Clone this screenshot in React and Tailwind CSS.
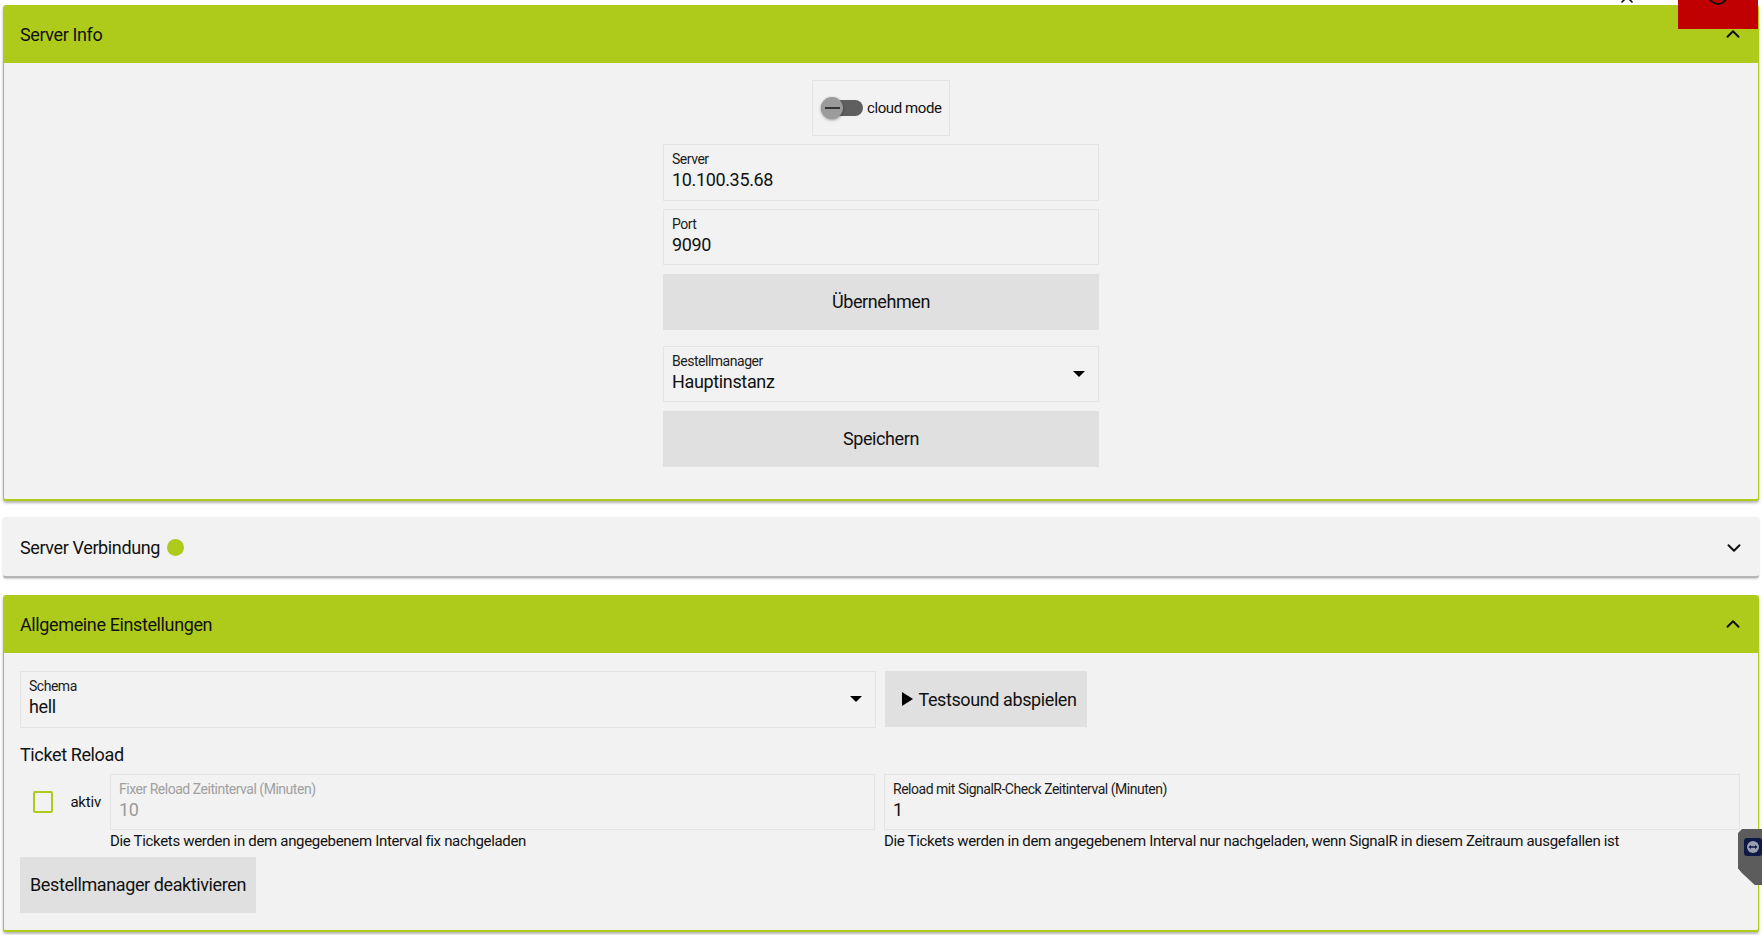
import React from "react";
import { ChevronUp, ChevronDown, X } from "lucide-react";

const font = { fontFamily: "Roboto, sans-serif" };

function Field({ label, value, disabled, select, className = "" }) {
  return (
    <div className={`relative h-[56.5px] border border-[#e4e4e4] px-[8px] pt-[6px] ${className}`}>
      <div className={`text-[14px] leading-[16px] tracking-[-0.48px] ${disabled ? "text-[#a0a0a0]" : "text-[#1c1c1c]"}`}>{label}</div>
      <div className={`mt-[1px] text-[18px] leading-[24px] tracking-[-0.35px] ${disabled ? "text-[#9a9a9a]" : "text-[#111]"}`}>{value}</div>
      {select && (
        <div className="absolute right-[13px] top-[24px] h-0 w-0 border-x-[6px] border-t-[6px] border-x-transparent border-t-black" />
      )}
    </div>
  );
}

function Btn({ children, className = "" }) {
  return (
    <div className={`flex h-[56px] items-center justify-center bg-[#e0e0e0] text-[18px] tracking-[-0.4px] text-[#111] ${className}`}>
      {children}
    </div>
  );
}

function Header({ title, open, children }) {
  return (
    <div className={`flex items-center justify-between pr-[14px] text-[18px] tracking-[-0.38px] text-[#111] ${open ? "h-[58px] bg-[#aecb1b] pl-[16px]" : "h-[59px] pl-[17px] pt-[2px]"}`}>
      <div className="flex items-center gap-[7px]">
        <span>{title}</span>
        {children}
      </div>
      {open ? <ChevronUp size={22} strokeWidth={2.2} /> : <ChevronDown size={22} strokeWidth={2.2} />}
    </div>
  );
}

const panel = "rounded-[3px] bg-[#f2f2f2]";
const openPanel = `${panel} border-x border-b-2 border-[#aecb1b] shadow-[0_2px_3px_rgba(0,0,0,0.3)]`;
const help = "mt-[1px] text-[15px] leading-[20px] tracking-[-0.32px] text-[#111] whitespace-nowrap";

export default function App() {
  return (
    <div style={font} className="relative h-[935px] overflow-hidden bg-white px-[3px] pt-[5px]">
      <div className={openPanel + " overflow-hidden"}>
        <Header title="Server Info" open />
        <div className="flex h-[436px] flex-col items-center pt-[17px]">
          <div className="flex h-[56px] w-[138px] items-center border border-[#e4e4e4] pl-[8px]">
            <div className="relative h-[16px] w-[42px] shrink-0 rounded-full bg-[#5f5f5f]">
              <div className="absolute left-0 top-[-3px] flex h-[22px] w-[22px] items-center justify-center rounded-full bg-[#9b9b9b] shadow-[0_1px_3px_rgba(0,0,0,0.4)]">
                <div className="h-[2px] w-[15px] bg-[#333]" />
              </div>
            </div>
            <span className="ml-[4px] whitespace-nowrap text-[15px] tracking-[-0.4px] text-[#111]">cloud mode</span>
          </div>
          <div className="mt-[8px] flex w-[436px] flex-col">
            <Field label="Server" value="10.100.35.68" />
            <Field label="Port" value="9090" className="mt-[8px]" />
            <Btn className="mt-[8.5px]">Übernehmen</Btn>
            <Field label="Bestellmanager" value="Hauptinstanz" select className="mt-[16px]" />
            <Btn className="mt-[8.5px]">Speichern</Btn>
          </div>
        </div>
      </div>

      <div className={`${panel} mt-[16px] border-b-2 border-[#b5b5b5] shadow-[0_1px_2px_rgba(0,0,0,0.2)]`}>
        <Header title="Server Verbindung">
          <span className="h-[17px] w-[17px] rounded-full bg-[#aecb1b]" />
        </Header>
      </div>

      <div className={openPanel + " mt-[17px] overflow-hidden"}>
        <Header title="Allgemeine Einstellungen" open />
        <div className="h-[277px] px-[16px] pt-[18px]">
          <div className="flex gap-[9px]">
            <Field label="Schema" value="hell" select className="w-[856px]" />
            <Btn className="w-[202px] gap-[5px] pl-[7px]">
              <span className="h-0 w-0 border-y-[7px] border-l-[11px] border-y-transparent border-l-black" />
              Testsound abspielen
            </Btn>
          </div>
          <div className="mt-[15px] text-[18px] leading-[24px] tracking-[-0.38px] text-[#111]">Ticket Reload</div>
          <div className="mt-[7px] flex gap-[9px]">
            <div className="flex h-[57px] w-[81px] shrink-0 items-center">
              <div className="ml-[13px] h-[22px] w-[22px] rounded-[2px] border-2 border-[#aecb1b]" />
              <span className="ml-[17px] text-[15px] tracking-[-0.2px] text-[#111]">aktiv</span>
            </div>
            <div className="w-[765px]">
              <Field label="Fixer Reload Zeitinterval (Minuten)" value="10" disabled />
              <div className={help}>Die Tickets werden in dem angegebenem Interval fix nachgeladen</div>
            </div>
            <div className="w-[856px]">
              <Field label="Reload mit SignalR-Check Zeitinterval (Minuten)" value="1" />
              <div className={help}>Die Tickets werden in dem angegebenem Interval nur nachgeladen, wenn SignalR in diesem Zeitraum ausgefallen ist</div>
            </div>
          </div>
          <Btn className="mt-[5.5px] w-[236px]">Bestellmanager deaktivieren</Btn>
        </div>
      </div>

      <div className="absolute right-[4px] top-0 flex h-[29px] w-[80px] justify-center overflow-hidden bg-[#c00000]">
        <div className="mt-[-15px] h-[20px] w-[20px] rounded-full border-2 border-[#111]" />
      </div>
      <X size={20} strokeWidth={2} className="absolute left-[1617px] top-[-13px] text-[#111]" />

      <div className="absolute right-0 top-[829px] h-[56px] w-[24px] bg-[#5c5c5c] [clip-path:polygon(4px_0,100%_0,100%_100%,70%_100%,15%_78%,0_70%,0_4px)]">
        <div className="absolute left-[6px] top-[9px] flex h-[18px] w-[18px] items-center justify-center rounded-[3px] bg-[#0e1a45]">
          <svg width="14" height="14" viewBox="0 0 14 14">
            <circle cx="7" cy="7" r="6" fill="#9a9eb0" />
            <path d="M2.5 7 L5 5 V6.2 H9 V5 L11.5 7 L9 9 V7.8 H5 V9 Z" fill="#0e1a45" />
          </svg>
        </div>
      </div>
    </div>
  );
}
